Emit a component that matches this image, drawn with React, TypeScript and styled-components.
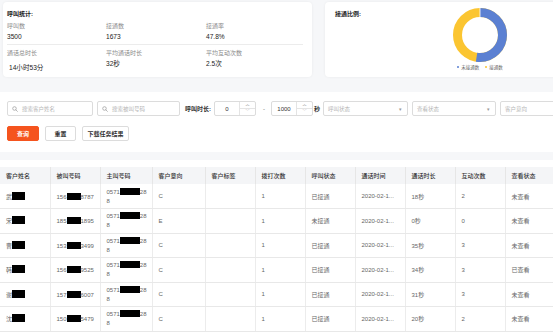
import styled, { createGlobalStyle } from 'styled-components'

const GlobalStyle = createGlobalStyle`
  html, body { margin: 0; padding: 0; }
  body {
    background: #f6f7f9;
    font-family: "Liberation Sans", "Noto Sans CJK SC", sans-serif;
    color: #333;
    overflow: hidden;
  }
`

interface Row {
  name: string
  phoneHead: string
  phoneTail: string
  intent: string
  status: string
  duration: string
  interact: string
  viewed: string
}

const rows: Row[] = [
  { name: '武', phoneHead: '156', phoneTail: '8787', intent: 'C', status: '已接通', duration: '18秒', interact: '2', viewed: '未查看' },
  { name: '宋', phoneHead: '185', phoneTail: '1895', intent: 'E', status: '未接通', duration: '0秒', interact: '0', viewed: '未查看' },
  { name: '曹', phoneHead: '153', phoneTail: '3499', intent: 'C', status: '已接通', duration: '35秒', interact: '3', viewed: '未查看' },
  { name: '韩', phoneHead: '156', phoneTail: '9525', intent: 'C', status: '已接通', duration: '34秒', interact: '3', viewed: '已查看' },
  { name: '谢', phoneHead: '157', phoneTail: '6007', intent: 'C', status: '已接通', duration: '31秒', interact: '3', viewed: '未查看' },
  { name: '沈', phoneHead: '150', phoneTail: '5479', intent: 'C', status: '已接通', duration: '20秒', interact: '2', viewed: '未查看' },
]

const columns = [
  { title: '客户姓名', width: 50 },
  { title: '被叫号码', width: 50 },
  { title: '主叫号码', width: 52 },
  { title: '客户意向', width: 53 },
  { title: '客户标签', width: 50 },
  { title: '拨打次数', width: 50 },
  { title: '呼叫状态', width: 50 },
  { title: '通话时间', width: 50 },
  { title: '通话时长', width: 50 },
  { title: '互动次数', width: 50 },
  { title: '查看状态', width: 60 },
]

function SearchIcon() {
  return (
    <svg width="6" height="6" viewBox="0 0 12 12" fill="none" stroke="#999" strokeWidth="1.4">
      <circle cx="5" cy="5" r="3.6" />
      <path d="M7.7 7.7 L10.8 10.8" strokeLinecap="round" />
    </svg>
  )
}

function Donut() {
  const r = 22.5
  const c = 2 * Math.PI * r
  const blue = 0.522
  return (
    <svg width="56" height="56" viewBox="0 0 56 56">
      <g transform="rotate(-90 28 28)">
        <circle cx="28" cy="28" r={r} fill="none" stroke="#fbc531" strokeWidth="9" />
        <circle
          cx="28"
          cy="28"
          r={r}
          fill="none"
          stroke="#5b80d2"
          strokeWidth="9"
          strokeDasharray={`${c * blue} ${c}`}
        />
      </g>
      <line x1="28" y1="1" x2="28" y2="10" stroke="#fff" strokeWidth="0.8" />
    </svg>
  )
}

function NumberBox({ value }: { value: string }) {
  return (
    <NumberInput>
      <span className="num">{value}</span>
      <Spinner>
        <span>︿</span>
        <span>﹀</span>
      </Spinner>
    </NumberInput>
  )
}

export default function App() {
  return (
    <Page>
      <GlobalStyle />
      <TopRow>
        <StatsCard>
          <CardTitle>呼叫统计:</CardTitle>
          <StatGrid>
            <Stat><span className="label">呼叫数</span><span className="value">3500</span></Stat>
            <Stat><span className="label">接通数</span><span className="value">1673</span></Stat>
            <Stat><span className="label">接通率</span><span className="value">47.8%</span></Stat>
          </StatGrid>
          <Divider />
          <StatGrid>
            <Stat $indent><span className="label">通话总时长</span><span className="value">14小时53分</span></Stat>
            <Stat><span className="label">平均通话时长</span><span className="value">32秒</span></Stat>
            <Stat><span className="label">平均互动次数</span><span className="value">2.5次</span></Stat>
          </StatGrid>
        </StatsCard>
        <RatioCard>
          <CardTitle>接通比例:</CardTitle>
          <ChartBox>
            <Donut />
            <Legend>
              <span><Dot $color="#5b80d2" />未接通数</span>
              <span><Dot $color="#fbc531" />接通数</span>
            </Legend>
          </ChartBox>
        </RatioCard>
      </TopRow>

      <FilterPanel>
        <FilterRow>
          <TextInput $width={86}><SearchIcon /><span>搜索客户姓名</span></TextInput>
          <TextInput $width={83}><SearchIcon /><span>搜索被叫号码</span></TextInput>
          <FieldLabel>呼叫时长:</FieldLabel>
          <NumberBox value="0" />
          <Dash>-</Dash>
          <NumberBox value="1000" />
          <FieldLabel>秒</FieldLabel>
          <SelectBox $width={85}><span>呼叫状态</span><span className="caret">▾</span></SelectBox>
          <SelectBox $width={84}><span>查看状态</span><span className="caret">▾</span></SelectBox>
          <TextInput $width={60}><span>客户意向</span></TextInput>
        </FilterRow>
        <ButtonRow>
          <Button $primary $width={32}>查询</Button>
          <Button $width={31}>重置</Button>
          <Button $width={47}>下载任务结果</Button>
        </ButtonRow>
      </FilterPanel>

      <TablePanel>
        <Table>
          <colgroup>
            {columns.map((c) => <col key={c.title} style={{ width: c.width }} />)}
          </colgroup>
          <thead>
            <tr>
              {columns.map((c) => <th key={c.title}>{c.title}</th>)}
            </tr>
          </thead>
          <tbody>
            {rows.map((r, i) => (
              <tr key={i}>
                <td>{r.name}<Redact $w={13} $h={8} /></td>
                <td>{r.phoneHead}<Redact $w={14} $h={7} />{r.phoneTail}</td>
                <td>
                  <Caller>
                    <span>0571<Redact $w={20} $h={7} />28</span>
                    <span>8</span>
                  </Caller>
                </td>
                <td>{r.intent}</td>
                <td></td>
                <td>1</td>
                <td>{r.status}</td>
                <td>2020-02-1...</td>
                <td>{r.duration}</td>
                <td>{r.interact}</td>
                <td>{r.viewed}</td>
              </tr>
            ))}
          </tbody>
        </Table>
      </TablePanel>
    </Page>
  )
}

const Page = styled.div`
  width: 553px;
  height: 334px;
  overflow: hidden;
`

const TopRow = styled.div`
  display: flex;
  gap: 13px;
  padding: 2px 0 0 3px;
`

const Card = styled.div`
  background: #fff;
  border-radius: 4px;
  box-shadow: 0 0 3px rgba(0, 0, 0, 0.06);
  height: 75px;
  box-sizing: border-box;
`

const StatsCard = styled(Card)`
  width: 309px;
  padding: 8px 9px 0 4px;
`

const RatioCard = styled(Card)`
  flex: 1;
  padding: 8px 0 0 10px;
  display: flex;
  margin-right: -10px;
`

const CardTitle = styled.div`
  font-size: 6px;
  font-weight: 700;
  color: #222;
  line-height: 8px;
  white-space: nowrap;
  width: 30px;
  flex-shrink: 0;
`

const StatGrid = styled.div`
  display: grid;
  grid-template-columns: 99px 100px 1fr;
  margin-top: 4px;
`

const Stat = styled.div<{ $indent?: boolean }>`
  display: flex;
  flex-direction: column;
  gap: 3px;

  .label {
    font-size: 6px;
    color: #8a8a8a;
    line-height: 8px;
  }

  .value {
    font-size: 6.6px;
    color: #222;
    line-height: 8px;
    padding-left: ${({ $indent }) => ($indent ? '2px' : '0')};
    margin-top: ${({ $indent }) => ($indent ? '4px' : '0')};
  }
`

const Divider = styled.div`
  height: 1px;
  background: #ececec;
  margin: 3px 0 0;
`

const ChartBox = styled.div`
  width: 56px;
  display: flex;
  flex-direction: column;
  align-items: center;
  margin-left: 87px;
  margin-top: -3px;
`

const Legend = styled.div`
  display: flex;
  gap: 6px;
  font-size: 4.5px;
  color: #666;
  margin-top: 1px;
  white-space: nowrap;

  span {
    display: flex;
    align-items: center;
    gap: 2px;
  }
`

const Dot = styled.i<{ $color: string }>`
  width: 2px;
  height: 2px;
  border-radius: 50%;
  background: ${({ $color }) => $color};
`

const FilterPanel = styled.div`
  background: #fff;
  margin-top: 15px;
  padding: 9px 0 9px 7px;
  height: 60px;
  box-sizing: border-box;
`

const FilterRow = styled.div`
  display: flex;
  align-items: center;
  height: 15px;
  white-space: nowrap;
`

const Box = styled.div`
  height: 15px;
  box-sizing: border-box;
  border: 1px solid #dcdcdc;
  border-radius: 2px;
  background: #fff;
  display: flex;
  align-items: center;
  font-size: 5.5px;
  color: #b5b5b5;
  flex-shrink: 0;
`

const TextInput = styled(Box)<{ $width: number }>`
  width: ${({ $width }) => $width}px;
  margin-right: 4px;
  padding-left: 4px;
  gap: 4px;
`

const SelectBox = styled(Box)<{ $width: number }>`
  width: ${({ $width }) => $width}px;
  margin-right: 4px;
  padding: 0 5px 0 4px;
  justify-content: space-between;

  .caret {
    color: #999;
    font-size: 5px;
  }
`

const FieldLabel = styled.span`
  font-size: 6px;
  font-weight: 700;
  color: #333;
  margin: 0 3px 0 1px;
`

const Dash = styled.span`
  font-size: 6px;
  color: #666;
  margin: 0 6px 0 7px;
`

const NumberInput = styled(Box)`
  width: 42px;
  color: #333;
  font-size: 6px;

  .num {
    flex: 1;
    text-align: center;
  }
`

const Spinner = styled.div`
  width: 15px;
  height: 100%;
  border-left: 1px solid #e4e4e4;
  display: flex;
  flex-direction: column;

  span {
    flex: 1;
    display: flex;
    align-items: center;
    justify-content: center;
    font-size: 4px;
    line-height: 1;
    color: #777;
  }

  span + span {
    border-top: 1px solid #e4e4e4;
    color: #aaa;
  }
`

const ButtonRow = styled.div`
  display: flex;
  gap: 5px;
  margin-top: 10px;
`

const Button = styled.div<{ $primary?: boolean; $width: number }>`
  width: ${({ $width }) => $width}px;
  height: 15px;
  box-sizing: border-box;
  display: flex;
  align-items: center;
  justify-content: center;
  border-radius: 2px;
  font-size: 6px;
  font-weight: 700;
  border: 1px solid ${({ $primary }) => ($primary ? '#f5541e' : '#dcdcdc')};
  background: ${({ $primary }) => ($primary ? '#f5541e' : '#fff')};
  color: ${({ $primary }) => ($primary ? '#fff' : '#333')};
  white-space: nowrap;

  & + & {
    margin-left: ${({ $primary }) => ($primary ? 0 : 1)}px;
  }
`

const TablePanel = styled.div`
  background: #fff;
  margin-top: 8px;
  padding-top: 7px;
  height: 200px;
`

const Table = styled.table`
  border-collapse: collapse;
  table-layout: fixed;
  width: 565px;
  font-size: 6px;

  th {
    background: #f4f5f7;
    height: 17px;
    padding: 0 0 0 6px;
    text-align: left;
    font-weight: 500;
    color: #333;
    border-left: 1px solid #e6e6e6;
  }

  th:first-child,
  td:first-child {
    border-left: none;
  }

  td {
    height: 24.5px;
    box-sizing: border-box;
    padding: 0 0 0 6px;
    color: #666;
    border-left: 1px solid #ececec;
    border-bottom: 1px solid #e8e8e8;
    white-space: nowrap;
    vertical-align: middle;
  }
`

const Redact = styled.span<{ $w: number; $h: number }>`
  display: inline-block;
  width: ${({ $w }) => $w}px;
  height: ${({ $h }) => $h}px;
  background: #000;
  vertical-align: -1px;
`

const Caller = styled.div`
  display: flex;
  flex-direction: column;
  line-height: 8px;
  gap: 1px;
`
